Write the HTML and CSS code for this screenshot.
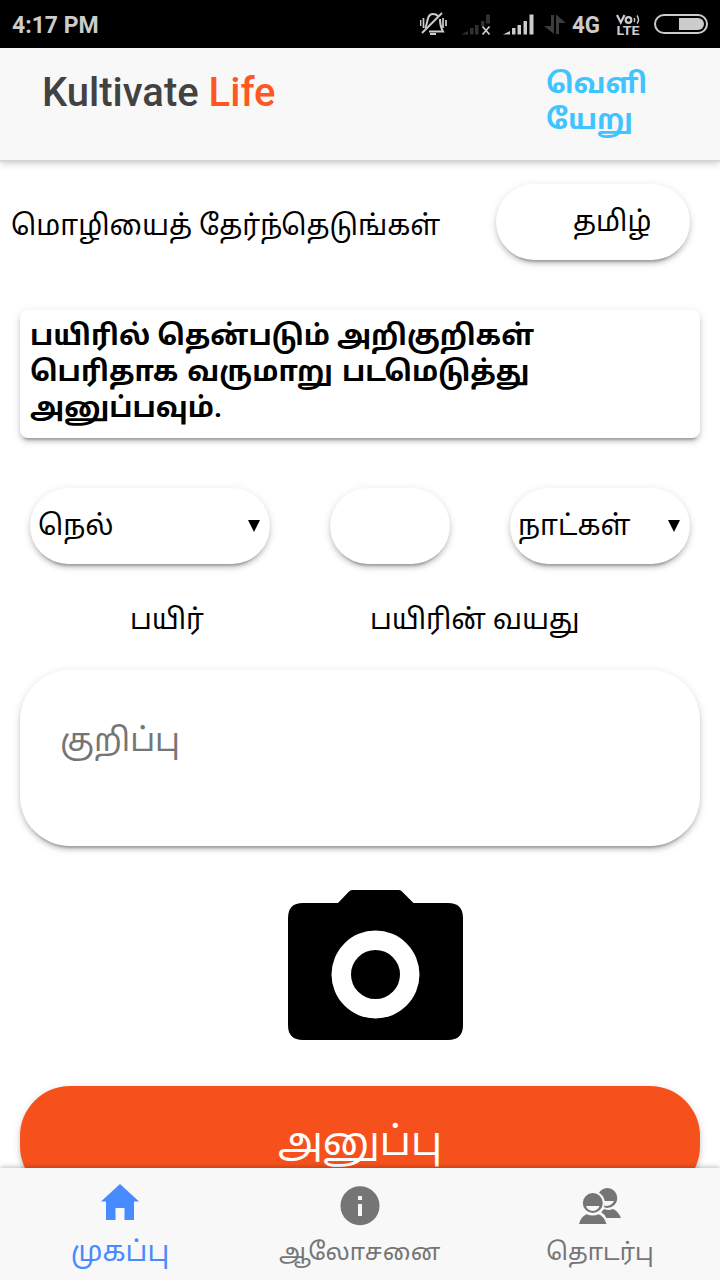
FILE: index.html
```html
<!DOCTYPE html>
<html lang="ta">
<head>
<meta charset="utf-8">
<title>Kultivate Life</title>
<link rel="stylesheet" href="styles.css">
</head>
<body>
<div class="app">
  <div class="status">
    <span class="clock">4:17 PM</span>
    <svg class="status-icons" width="300" height="48" viewBox="0 0 300 48">
      <g fill="none" stroke="#ccc" stroke-width="2">
        <path d="M2 33 L22 13" />
        <path d="M5 28 C8 25 6 14 13 14 C16 14 17 15 18 16 M20 19 C20 25 21 28 23 31.500 H9" />
        <path d="M10 34 H16" />
        <path d="M0.500 20 V26 M3.500 18 V28 M23 18 V28 M26 20 V26" stroke-width="1.700" />
      </g>
      <g fill="#303030">
        <path d="M41 34.500 L48 31 V34.500Z" /><rect x="50" y="28" width="3.500" height="6.500" /><rect x="55" y="25" width="3.500" height="9.500" /><rect x="61" y="21" width="3.500" height="5" /><rect x="66" y="14.500" width="4" height="9" />
      </g>
      <path d="M62.500 26.500 L69.500 34.500 M69.500 26.500 L62.500 34.500" stroke="#ccc" stroke-width="1.800" />
      <g fill="#ccc">
        <path d="M83 34.500 L90 31 V34.500Z" /><rect x="92" y="28" width="3.500" height="6.500" /><rect x="97.500" y="25" width="3.500" height="9.500" /><rect x="103.500" y="21" width="3.500" height="13.500" /><rect x="109.500" y="14.500" width="4" height="20" />
      </g>
      <path d="M131 15 H134 V34 L124 26 H131Z M136 34 H139 V23 H146 L136 14.500Z" fill="#3c3c3c" />
      <path d="M197 15 L200.800 22.500 L204.500 15" fill="none" stroke="#ccc" stroke-width="2.200" />
      <circle cx="208.500" cy="20" r="2.800" fill="none" stroke="#ccc" stroke-width="2.200" />
      <path d="M214 18 Q215.500 20 214 22 M217 15.500 Q220 20 217 23.500" fill="none" stroke="#ccc" stroke-width="1.400" />
      <rect x="235" y="15" width="52" height="18" rx="9" fill="none" stroke="#ccc" stroke-width="2" />
      <path d="M259 18 H278 A6 6 0 0 1 278 30 H259Z" fill="#ccc" />
      <text x="152" y="33" class="net" textLength="28" lengthAdjust="spacingAndGlyphs">4G</text>
      <text x="196.500" y="34.500" class="lte" textLength="23" lengthAdjust="spacingAndGlyphs">LTE</text>
    </svg>
  </div>
  <header class="header">
    <h1 class="brand">Kultivate <span class="accent">Life</span></h1>
    <a class="logout">வெளி<br>யேறு</a>
  </header>
  <main class="content">
    <div class="language">
      <span class="language-label">மொழியைத் தேர்ந்தெடுங்கள்</span>
      <div class="pill language-pill"><span class="language-value">தமிழ்</span></div>
    </div>
    <p class="notice">பயிரில் தென்படும் அறிகுறிகள்<br><span class="spaced">பெரிதாக வருமாறு படமெடுத்து</span><br>அனுப்பவும்.</p>
    <div class="fields">
      <div class="pill crop"><span class="crop-value">நெல்</span><svg width="12" height="12"><path d="M0 0H12L6 12Z" /></svg></div>
      <div class="pill age"></div>
      <div class="pill unit"><span class="unit-value">நாட்கள்</span><svg width="12" height="12"><path d="M0 0H12L6 12Z" /></svg></div>
    </div>
    <div class="captions"><span>பயிர்</span><span>பயிரின் வயது</span></div>
    <div class="note">குறிப்பு</div>
    <svg class="camera" width="176" height="150" viewBox="0 0 176 150">
      <path fill-rule="evenodd" d="M15 13H50L61 1.500Q62.500 0 64 0H111Q113 0 114 1.500L125.500 13H160Q175 13 175 28V135Q175 150 160 150H15Q0 150 0 135V28Q0 13 15 13ZM87.500 40.500A44 44 0 1 0 87.500 128.500A44 44 0 1 0 87.500 40.500Z" />
      <circle cx="87.500" cy="84.500" r="24.500" />
    </svg>
    <div class="send">அனுப்பு</div>
  </main>
  <nav class="tabs">
    <a class="tab active">
      <svg width="44" height="42" viewBox="0 0 44 42"><path d="M22 0L41 17.500H36V36H26.500V24H17.500V36H8V17.500H3Z" /></svg>
      <span>முகப்பு</span>
    </a>
    <a class="tab">
      <svg width="44" height="42" viewBox="0 0 44 42"><path fill-rule="evenodd" d="M22 2.300A19.500 19.500 0 1 0 22 41.300A19.500 19.500 0 1 0 22 2.300ZM20 12H24V16H20ZM20 20H24V32H20Z" /></svg>
      <span class="advice">ஆலோசனை</span>
    </a>
    <a class="tab">
      <svg width="44" height="42" viewBox="0 0 44 42">
        <circle cx="29.300" cy="14" r="10" />
        <path d="M25 17H36Q34 22 27 22Z" fill="#f8f8f8" />
        <path d="M21 34C23 28 24 26 27 25Q30 27 35 25Q40 27 43 34Z" />
        <circle cx="14.800" cy="19" r="12" fill="#f8f8f8" />
        <path d="M-1 40C1 32 4 27 9 27H20Q27 28 31 40Z" fill="#f8f8f8" />
        <circle cx="14.800" cy="19" r="10" />
        <path d="M8 22H21.500Q20 26.500 14.800 27Q9.500 26.500 8 22Z" fill="#f8f8f8" />
        <path d="M1 40Q3 32.500 8.500 30.200Q15 33 20.500 30.200Q26 32 28.500 40Z" />
      </svg>
      <span>தொடர்பு</span>
    </a>
  </nav>
</div>
</body>
</html>
```
FILE: styles.css
```css
* { box-sizing: border-box; }
body { margin: 0; background: #fff; font-family: Roboto, "Noto Sans Tamil", "Noto Sans", sans-serif; color: #000; }
.app { width: 720px; height: 1280px; display: flex; flex-direction: column; overflow: hidden; }
.status { height: 48px; flex: none; background: #000; color: #ccc; display: flex; justify-content: space-between; padding: 0 0 0 12px; }
.clock { font: 700 23px/51px Roboto, sans-serif; }
.net { font: 700 24px Roboto, sans-serif; fill: #ccc; }
.lte { font: 700 12px Roboto, sans-serif; fill: #ccc; }
.header { height: 112px; flex: none; background: #f8f8f8; display: flex; justify-content: space-between; padding: 17px 74px 0 42px; box-shadow: 0 2px 2px #d4d4d4, 0 4px 7px rgba(0,0,0,.16); z-index: 1; clip-path: inset(0 0 -14px 0); }
.brand { margin: 0; font: 500 40px/56px Roboto, sans-serif; color: #424242; white-space: nowrap; }
.accent { color: #ff5722; }
.logout { width: 100px; padding-top: 1px; font-size: 28px; line-height: 36px; font-weight: 700; color: #40c4ff; white-space: nowrap; }
.content { flex: 1; min-height: 0; overflow: hidden; padding: 24px 20px 0; display: flex; flex-direction: column; }
.content > * { flex: none; }
.pill { height: 76px; border-radius: 40px; background: #fff; display: flex; align-items: center; }
.pill, .notice, .note, .send { box-shadow: 0 4px 4px rgba(0,0,0,.14), 0 6px 2px -4px rgba(0,0,0,.2), 0 2px 10px rgba(0,0,0,.12); }
.language { display: flex; justify-content: space-between; margin: 0 10px 0 -9px; height: 76px; }
.language-label { font-size: 28px; line-height: 84px; white-space: nowrap; }
.language-pill { width: 194px; padding: 0 0 0 77px; }
.language-value, .crop-value, .unit-value { font-size: 28px; line-height: 40px; white-space: nowrap; }
.notice { margin: 50px 0 0; height: 128px; padding: 8px 10px; border-radius: 8px; font-size: 28px; line-height: 36px; font-weight: 700; white-space: nowrap; }
.spaced { word-spacing: 2px; }
.fields { display: flex; gap: 60px; margin: 50px 10px 0; }
.fields .pill { justify-content: space-between; padding: 0 10px 0 8px; }
.crop { width: 240px; }
.age { width: 120px; }
.unit { width: 180px; }
.captions { display: grid; grid-template-columns: 240px 1fr; margin: 36px 0 0 110px; height: 40px; font-size: 28px; line-height: 40px; white-space: nowrap; }
.note { margin-top: 30px; height: 176px; border-radius: 50px; padding: 46px 40px; font-size: 32px; line-height: 48px; color: #757575; }
.camera { margin: 44px 0 0 268px; }
.send { margin-top: 46px; height: 110px; border-radius: 50px; background: #f6511d; color: #fff; font-size: 40px; line-height: 112px; text-align: center; }
.tabs { height: 112px; flex: none; background: #f8f8f8; display: grid; grid-template-columns: repeat(3, 1fr); box-shadow: 0 -1px 5px rgba(0,0,0,.25); z-index: 1; }
.tab { display: flex; flex-direction: column; align-items: center; padding-top: 16px; color: #757575; fill: #757575; font-size: 24px; white-space: nowrap; }
.tab svg { flex: none; }
.tab span { line-height: 36px; margin-top: 8px; }
.tab .advice { letter-spacing: .7px; }
.active { color: #488aff; fill: #488aff; font-size: 28px; }
```
